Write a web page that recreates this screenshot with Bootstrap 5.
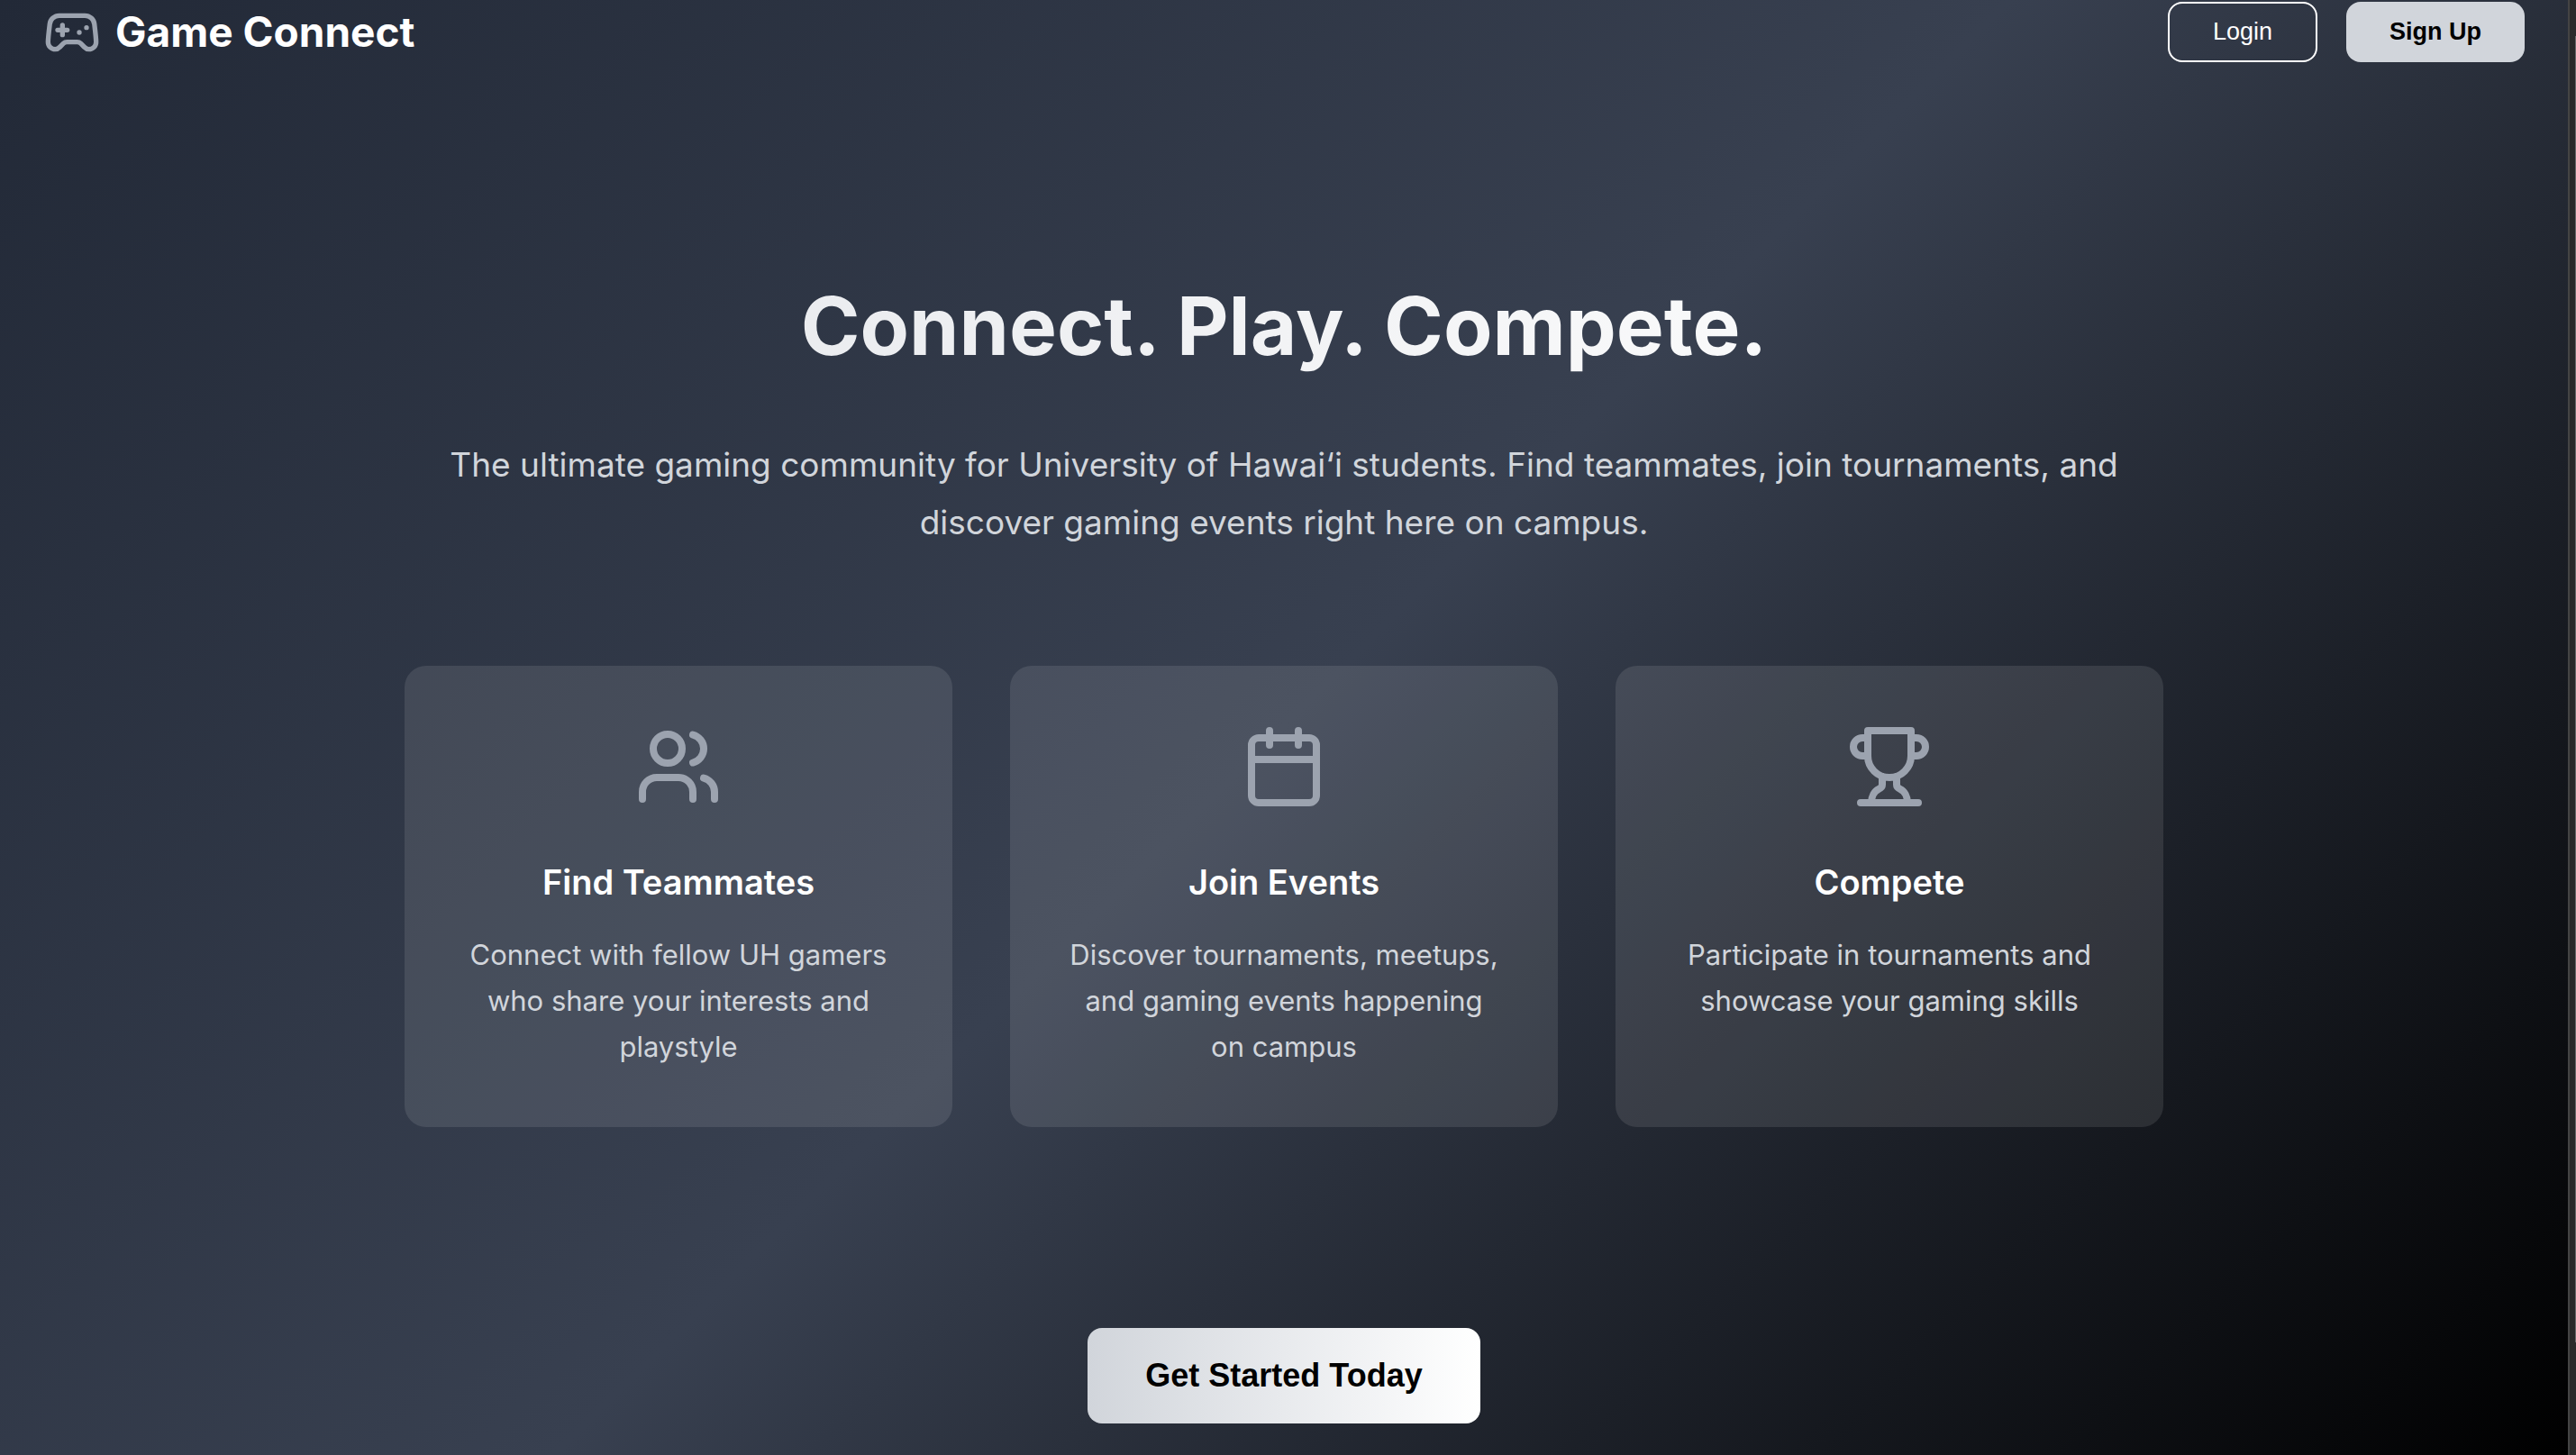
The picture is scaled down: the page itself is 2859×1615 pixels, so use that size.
<!DOCTYPE html>
<html lang="en">
<head>
<meta charset="utf-8">
<meta name="viewport" content="width=device-width, initial-scale=1">
<title>Game Connect</title>
<link href="https://cdn.jsdelivr.net/npm/bootstrap@5.3.0/dist/css/bootstrap.min.css" rel="stylesheet">
<style>
  body { font-family: Inter, "Liberation Sans", sans-serif; background: #000; color: #fff; }
  .page-shell { min-height: 100vh; }
  .landing { background: linear-gradient(135deg, #222937 0%, #384050 50%, #000 100%); }
  .scroll-track { width: 9px; background: #2b2b2b; border-left: 2px solid #444; }
  .scroll-thumb { width: 1px; height: 1450px; margin-top: 40px; background: #6b6b6b; }
  .site-bar { padding: 2px 48px 0; }
  .brand-link { gap: 16px; color: #fff; font-size: 46px; font-weight: 700; line-height: 67px; }
  .brand-link svg { width: 64px; height: 64px; }
  .line-icon { fill: none; stroke: #9ca3af; stroke-width: 2; stroke-linecap: round; stroke-linejoin: round; }
  .bar-btn, .cta-btn { font-family: "Liberation Sans", Arial, sans-serif; border-radius: 16px; }
  .bar-btn { font-size: 27px; line-height: 31px; padding: 16px 48px; border-width: 2px; }
  .bar-actions { gap: 32px; }
  .signup-btn, .signup-btn:hover { padding: 18px 48px; border: 0; background: #d1d5db; color: #000; }
  .hero { max-width: 2048px; padding: 226px 48px 32px; }
  .hero-title { font-size: 89px; font-weight: 700; line-height: 134px; margin-bottom: 55px;
    background: linear-gradient(90deg, #e5e7eb, #fff); -webkit-background-clip: text; background-clip: text; color: transparent; }
  .hero-lead { font-size: 37px; line-height: 64px; color: #d1d5db; margin-bottom: 127px; }
  .feature-grid { gap: 64px; margin-bottom: 223px; }
  .feature-tile { flex: 1 1 0; padding: 64px; border-radius: 24px; background: rgba(255,255,255,.1); }
  .feature-tile svg { width: 96px; height: 96px; margin-bottom: 48px; }
  .feature-tile h2 { font-size: 38px; font-weight: 600; line-height: 64px; margin-bottom: 23px; }
  .feature-tile p { font-size: 31px; line-height: 51px; color: #d1d5db; }
  .cta-btn, .cta-btn:hover { font-size: 36px; line-height: 42px; padding: 32px 64px; border: 0; color: #000;
    background: linear-gradient(90deg, #d1d5db, #fff); }
</style>
</head>
<body>
<div class="page-shell d-flex">
  <div class="landing flex-grow-1">
    <header class="site-bar d-flex justify-content-between align-items-start">
      <a href="#" class="brand-link d-flex align-items-center text-decoration-none">
        <svg class="line-icon" viewBox="0 0 24 24" aria-hidden="true"><path d="M6 11h4M8 9v4M15 12h.01M18 10h.01"/><path d="M17.32 5H6.68a4 4 0 0 0-3.978 3.59c-.006.052-.01.101-.017.152C2.604 9.416 2 14.456 2 16a3 3 0 0 0 3 3c1 0 1.5-.5 2-1l1.414-1.414A2 2 0 0 1 9.828 16h4.344a2 2 0 0 1 1.414.586L17 18c.5.5 1 1 2 1a3 3 0 0 0 3-3c0-1.545-.604-6.584-.685-7.258-.007-.05-.011-.1-.017-.151A4 4 0 0 0 17.32 5z"/></svg>
        <span>Game Connect</span>
      </a>
      <nav class="bar-actions d-flex" aria-label="Account">
        <button type="button" class="btn btn-outline-light bar-btn border-white text-white">Login</button>
        <button type="button" class="btn bar-btn signup-btn fw-bold">Sign Up</button>
      </nav>
    </header>
    <main class="hero mx-auto text-center">
      <h1 class="hero-title">Connect. Play. Compete.</h1>
      <p class="hero-lead">The ultimate gaming community for University of Hawai‘i students. Find teammates, join tournaments, and discover gaming events right here on campus.</p>
      <div class="feature-grid d-flex">
        <section class="feature-tile">
          <svg class="line-icon" viewBox="0 0 24 24" aria-hidden="true"><path d="M16 21v-2a4 4 0 0 0-4-4H6a4 4 0 0 0-4 4v2"/><circle cx="9" cy="7" r="4"/><path d="M22 21v-2a4 4 0 0 0-3-3.87M16 3.13a4 4 0 0 1 0 7.75"/></svg>
          <h2>Find Teammates</h2>
          <p class="mb-0">Connect with fellow UH gamers who share your interests and playstyle</p>
        </section>
        <section class="feature-tile">
          <svg class="line-icon" viewBox="0 0 24 24" aria-hidden="true"><path d="M8 2v4M16 2v4M3 10h18"/><rect width="18" height="18" x="3" y="4" rx="2"/></svg>
          <h2>Join Events</h2>
          <p class="mb-0">Discover tournaments, meetups, and gaming events happening on campus</p>
        </section>
        <section class="feature-tile">
          <svg class="line-icon" viewBox="0 0 24 24" aria-hidden="true"><path d="M6 9H4.5a2.5 2.5 0 0 1 0-5H6M18 9h1.5a2.5 2.5 0 0 0 0-5H18M4 22h16M10 14.66V17c0 .55-.47.98-.97 1.21C7.85 18.75 7 20.24 7 22M14 14.66V17c0 .55.47.98.97 1.21C16.15 18.75 17 20.24 17 22M18 2H6v7a6 6 0 0 0 12 0V2Z"/></svg>
          <h2>Compete</h2>
          <p class="mb-0">Participate in tournaments and showcase your gaming skills</p>
        </section>
      </div>
      <button type="button" class="btn cta-btn fw-bold">Get Started Today</button>
    </main>
  </div>
  <div class="scroll-track d-flex justify-content-end flex-shrink-0" aria-hidden="true"><div class="scroll-thumb"></div></div>
</div>
<script src="https://cdn.jsdelivr.net/npm/bootstrap@5.3.0/dist/js/bootstrap.bundle.min.js"></script>
</body>
</html>
